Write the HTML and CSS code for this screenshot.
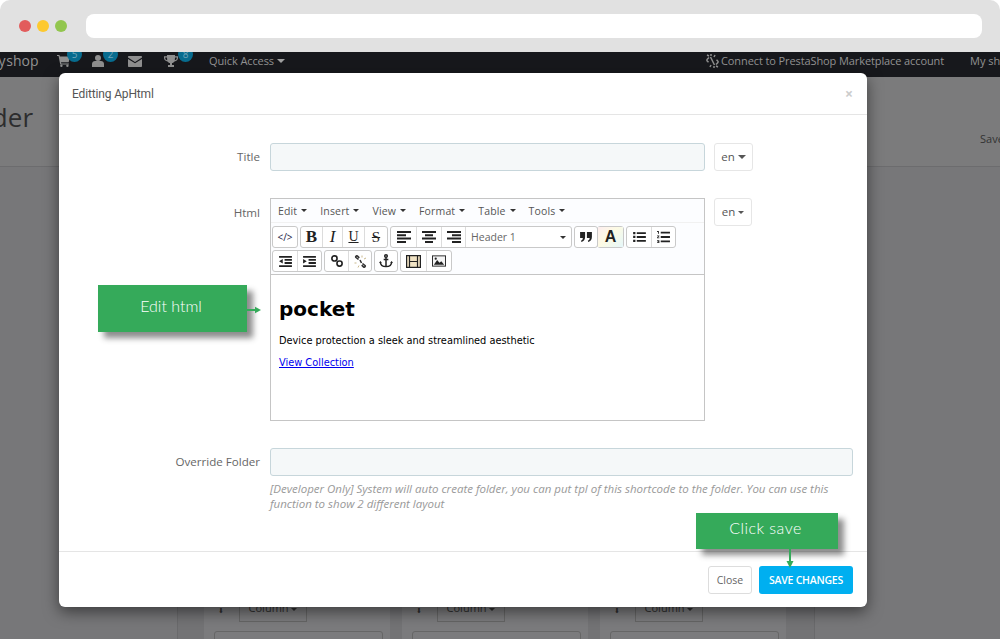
FILE: index.html
```html
<!DOCTYPE html>
<html lang="en">
<head>
<meta charset="utf-8">
<title>Editting ApHtml</title>
<link rel="stylesheet" href="styles.css">
</head>
<body>
<div class="screen">
  <header class="chrome">
    <div class="dots"><i class="dot red"></i><i class="dot yellow"></i><i class="dot green"></i></div>
    <div class="urlbar"></div>
  </header>

  <nav class="topnav">
    <div class="nav-left">
      <span class="shop">My shop</span>
      <span class="nav-icon cart">
        <svg width="13" height="12" viewBox="0 0 13 12"><path fill="#8f8f8f" d="M0 0h2.400l.5 1.600H13l-1.300 5.600H4l.3 1.200h7.600v1H3.200L1.600 1H0z"/><circle fill="#8f8f8f" cx="4.400" cy="10.800" r="1.200"/><circle fill="#8f8f8f" cx="10.400" cy="10.800" r="1.200"/></svg>
        <b class="badge">5</b>
      </span>
      <span class="nav-icon user">
        <svg width="12" height="12" viewBox="0 0 12 12"><circle fill="#8f8f8f" cx="6" cy="3" r="3"/><path fill="#8f8f8f" d="M0 12V9c0-2 1.500-3 3-3h6c1.500 0 3 1 3 3v3z"/></svg>
        <b class="badge">2</b>
      </span>
      <span class="nav-icon mail">
        <svg width="14" height="11" viewBox="0 0 14 11"><path fill="#8f8f8f" d="M1 0h12c.6 0 1 .4 1 1v.6L7 6 0 1.600V1c0-.6.4-1 1-1zM0 3l7 4.300L14 3v7c0 .6-.4 1-1 1H1c-.6 0-1-.4-1-1z"/></svg>
      </span>
      <span class="nav-icon trophy">
        <svg width="14" height="12" viewBox="0 0 14 12"><path fill="#8f8f8f" d="M3 0h8v1.200h3V3c0 2-1.500 3.200-3.500 3.400C10 7.200 9 7.800 8 8v2h2v2H4v-2h2V8C5 7.800 4 7.200 3.500 6.400 1.500 6.200 0 5 0 3V1.200h3zM1.200 2.400V3c0 1.200.8 2 2 2.200L3 2.400zm11.600 0H11l-.2 2.800c1.200-.2 2-1 2-2.200z"/></svg>
        <b class="badge">8</b>
      </span>
      <span class="quick">Quick Access <i class="caret caret-nav"></i></span>
    </div>
    <div class="nav-right">
      <svg class="broken-link" width="13" height="14" viewBox="0 0 13 14"><path fill="none" stroke="#8f8f8f" stroke-width="1.500" d="M3 3.500 1.500 5c-.8.800-.8 1.600 0 2.300l1 1M10 10.500l1.500-1.500c.8-.8.800-1.600 0-2.300l-1-1M4.500 3l4 8M1 1l2 1M5 0v2M8 14v-2M12 13l-2-1M9 1l-1 2M4 13l1-2"/></svg>
      <span class="connect">Connect to PrestaShop Marketplace account</span>
      <span class="myshop">My shop</span>
    </div>
  </nav>

  <div class="backdrop">
    <section class="page-head">
      <h1>Builder</h1>
      <span class="save-label">Save</span>
    </section>
    <section class="page-body">
      <div class="panel">
        <div class="col"><div class="col-tools"><span class="down">⬇</span><span class="col-btn">Column <i class="caret"></i></span></div><div class="col-box"></div></div>
        <div class="col"><div class="col-tools"><span class="down">⬇</span><span class="col-btn">Column <i class="caret"></i></span></div><div class="col-box"></div></div>
        <div class="col"><div class="col-tools"><span class="down">⬇</span><span class="col-btn">Column <i class="caret"></i></span></div><div class="col-box"></div></div>
      </div>
    </section>
  </div>

  <div class="modal">
    <div class="modal-head">
      <h2>Editting ApHtml</h2>
      <span class="close-x">×</span>
    </div>
    <div class="modal-body">
      <div class="row">
        <label class="lbl lbl-title">Title</label>
        <div class="input title-input"></div>
        <span class="lang">en <i class="caret caret-big"></i></span>
      </div>
      <div class="row row-html">
        <label class="lbl lbl-html">Html</label>
        <div class="editor">
          <div class="menubar">
            <span>Edit <i class="caret"></i></span>
            <span>Insert <i class="caret"></i></span>
            <span>View <i class="caret"></i></span>
            <span>Format <i class="caret"></i></span>
            <span>Table <i class="caret"></i></span>
            <span>Tools <i class="caret"></i></span>
          </div>
          <div class="toolbar">
            <div class="tool-row">
              <div class="grp"><span class="tb w24 code">&lt;/&gt;</span></div>
              <div class="grp">
                <span class="tb w21 tx bold">B</span>
                <span class="tb w20 tx ital">I</span>
                <span class="tb w22 tx under">U</span>
                <span class="tb w23 tx strike">S</span>
              </div>
              <div class="grp">
                <span class="tb w25"><svg width="14" height="12" viewBox="0 0 14 12"><path class="ic" d="M0 0h14v2H0zM0 3.300h9v2H0zM0 6.600h14v2H0zM0 10h9v2H0z"/></svg></span>
                <span class="tb w25"><svg width="14" height="12" viewBox="0 0 14 12"><path class="ic" d="M0 0h14v2H0zM3 3.300h8v2H3zM0 6.600h14v2H0zM3 10h8v2H3z"/></svg></span>
                <span class="tb w24"><svg width="14" height="12" viewBox="0 0 14 12"><path class="ic" d="M0 0h14v2H0zM5 3.300h9v2H5zM0 6.600h14v2H0zM5 10h9v2H5z"/></svg></span>
                <span class="tb select">Header 1 <i class="caret"></i></span>
              </div>
              <div class="grp quote-grp"><span class="tb w22"><svg width="12" height="10" viewBox="0 0 13 11"><path class="ic" d="M0 0h5.500v5.500c0 2.800-1.500 4.800-4 5.500L1 9.500c1.300-.5 2-1.500 2-3H0zM7.500 0H13v5.500c0 2.800-1.500 4.800-4 5.500l-.5-1.500c1.300-.5 2-1.500 2-3h-3z"/></svg></span></div>
              <div class="grp color-grp"><span class="tb w25 color">A</span></div>
              <div class="grp lists">
                <span class="tb w24"><svg width="13" height="10" viewBox="0 0 14 11"><path class="ic" d="M0 0h2.500v2.500H0zM4 .3h10v2H4zM0 4.200h2.500v2.500H0zM4 4.500h10v2H4zM0 8.500h2.500V11H0zM4 8.800h10v2H4z"/></svg></span>
                <span class="tb w24"><svg width="13" height="12" viewBox="0 0 14 13"><path class="ic" d="M0 0h2v3H1V1H0zM4 .8h10v2H4zM0 5h2.500v.8L1 7h1.500v.8H0V7l1.500-1.300H0zM4 5.500h10v2H4zM0 10h2.500v3H0v-.7h1.600v-.5H.5v-.6h1.100v-.5H0zM4 10.300h10v2H4z"/></svg></span>
              </div>
            </div>
            <div class="tool-row">
              <div class="grp">
                <span class="tb w24"><svg width="13" height="11" viewBox="0 0 14 12"><path class="ic" d="M0 0h14v2H0zM6 3.300h8v2H6zM6 6.600h8v2H6zM0 10h14v2H0zM4 3.300v5L0 5.800z"/></svg></span>
                <span class="tb w24"><svg width="13" height="11" viewBox="0 0 14 12"><path class="ic" d="M0 0h14v2H0zM6 3.300h8v2H6zM6 6.600h8v2H6zM0 10h14v2H0zM0 3.300v5l4-2.500z"/></svg></span>
              </div>
              <div class="grp">
                <span class="tb w23"><svg width="12" height="12" viewBox="0 0 13 13"><g fill="none" stroke="#222" stroke-width="1.800"><rect x="1" y="1" width="5.500" height="5.500" rx="2.500"/><rect x="6.500" y="6.500" width="5.500" height="5.500" rx="2.500"/></g></svg></span>
                <span class="tb w23"><svg width="13" height="13" viewBox="0 0 13 13"><g fill="none" stroke="#333" stroke-width="1.600"><path d="M4.500 4.500 2 2.500c-.8-.8.400-2.100 1.300-1.500l2 1.800M8.500 8.500l2.500 2c.8.800-.4 2.100-1.300 1.500l-2-1.800M6 5l1.500 3"/></g><path fill="none" stroke="#c9b98c" d="M8 .5v2M12 3l-2 1M.5 8h2M4 12.500l1-2"/></svg></span>
              </div>
              <div class="grp"><span class="tb w22"><svg width="14" height="14" viewBox="0 0 15 15"><g fill="none" stroke="#222" stroke-width="1.600"><circle cx="7.500" cy="2.200" r="1.400"/><path d="M7.500 3.500V14M5 6h5M1.500 8.500c0 3.200 2.500 5 6 5s6-1.800 6-5"/></g><path class="ic" d="m0 9.500 1.500-2 1.500 2zM12 9.500l1.500-2 1.500 2z"/></svg></span></div>
              <div class="grp">
                <span class="tb w25"><svg width="15" height="13" viewBox="0 0 15 13"><rect fill="#f1e3c4" width="15" height="13"/><path fill="none" stroke="#222" stroke-width="1.200" d="M.6.6h13.800v11.800H.6zM3.500.6v11.800M11.500.6v11.800M3.500 6.500h8"/></svg></span>
                <span class="tb w25"><svg width="14" height="12" viewBox="0 0 15 12"><path fill="#222" d="M0 0h15v12H0z"/><path fill="#f4f4f4" d="M1 1h13v10H1z"/><path fill="#222" d="m2 10 3.500-5 2.500 3 2-1.800 3 3.800z"/><circle fill="#222" cx="4" cy="3.500" r="1.200"/></svg></span>
              </div>
            </div>
          </div>
          <div class="content">
            <h3>pocket</h3>
            <p>Device protection a sleek and streamlined aesthetic</p>
            <p><a href="#">View Collection</a></p>
          </div>
        </div>
        <span class="lang lang-html">en <i class="caret"></i></span>
      </div>
      <div class="row row-override">
        <label class="lbl">Override Folder</label>
        <div class="override">
          <div class="input"></div>
          <p class="help">[Developer Only] System will auto create folder, you can put tpl of this shortcode to the folder. You can use this function to show 2 different layout</p>
        </div>
      </div>
    </div>
    <div class="modal-foot">
      <span class="btn btn-close">Close</span>
      <span class="btn btn-save">SAVE CHANGES</span>
    </div>
  </div>

  <div class="callout callout-edit">Edit html</div>
  <svg class="arrow arrow-right" width="14" height="8" viewBox="0 0 14 8"><path fill="none" stroke="#35aa5a" stroke-width="2" d="M0 4h9"/><path fill="#35aa5a" d="M8 .8 14 4 8 7.200z"/></svg>
  <div class="callout callout-save">Click save</div>
  <svg class="arrow arrow-down" width="8" height="19" viewBox="0 0 8 19"><path fill="none" stroke="#35aa5a" stroke-width="2" d="M4 0v13"/><path fill="#35aa5a" d="M.5 12h7L4 19z"/></svg>
</div>
</body>
</html>
```
FILE: styles.css
```css
* { box-sizing: border-box; }
html, body { margin: 0; padding: 0; background: #fff; }
body { font-family: "Open Sans", "Liberation Sans", sans-serif; color: #555; }
.screen { position: relative; width: 1000px; height: 639px; overflow: hidden; display: flex; flex-direction: column; }

/* browser chrome */
.chrome { height: 52px; flex: none; background: #e1e1e1; border-radius: 10px 10px 0 0; display: flex; align-items: center; padding: 0 18px 0 19px; }
.dots { display: flex; gap: 6px; width: 67px; }
.dot { width: 12px; height: 12px; border-radius: 50%; }
.red { background: #e25c5c; }
.yellow { background: #fdc92f; }
.green { background: #92c64e; }
.urlbar { flex: 1; height: 24px; background: #fff; border-radius: 8px; }

/* shop nav */
.topnav { height: 25px; flex: none; background: #17181c; color: #929292; display: flex; justify-content: space-between; font-size: 11px; line-height: 18px; padding-bottom: 7px; white-space: nowrap; overflow: hidden; }
.nav-left, .nav-right { display: flex; align-items: center; height: 18px; }
.shop { font-size: 14px; margin-left: -14px; width: 71px; word-spacing: -3px; }
.nav-icon { position: relative; display: flex; align-items: center; }
.cart { width: 35px; }
.user { width: 36px; }
.mail { width: 36px; }
.trophy { width: 45px; }
.badge { position: absolute; top: -8px; width: 15px; height: 15px; border-radius: 50%; background: #086c8f; color: #6fa3b8; font-size: 10px; font-weight: 400; line-height: 14px; text-align: center; }
.cart .badge { left: 10px; }
.user .badge { left: 11px; }
.trophy .badge { left: 14px; }
.quick { display: flex; align-items: center; gap: 3px; letter-spacing: -.1px; }
.broken-link { margin-right: 2px; }
.connect { width: 249px; letter-spacing: -.1px; }
.myshop { width: 30px; }

/* dimmed page */
.backdrop { flex: 1; background: #777779; display: flex; flex-direction: column; }
.page-head { height: 90px; flex: none; background: #7b7b7c; border-bottom: 1px solid #6c6c6e; padding-top: 22px; display: flex; justify-content: space-between; }
.page-head h1 { margin: 0 0 0 -54px; font-size: 26px; font-weight: 400; line-height: 36px; color: #2d2d2e; }
.save-label { font-size: 11px; margin: 32px -3px 0 0; width: 23px; color: #333; overflow: hidden; }
.page-body { flex: 1; padding: 0 185px 0 177px; display: flex; }
.panel { flex: 1; background: #737375; border-left: 1px solid #6a6a6c; border-right: 1px solid #6a6a6c; display: flex; align-items: flex-end; gap: 12px; padding: 0 28px 0 26px; }
.col { flex: 1; height: 40px; background: #7b7b7d; padding: 0 0 0 10px; }
.col-tools { display: flex; align-items: center; height: 23px; font-size: 11px; color: #2e2e2e; }
.down { width: 25px; font-size: 7px; padding-left: 4px; }
.col-btn { width: 68px; height: 23px; border: 1px solid #666; text-align: center; line-height: 16px; }
.col-box { height: 20px; margin-top: 9px; border: 1px solid #666; border-radius: 3px; width: 169px; }

/* modal */
.modal { position: absolute; left: 59px; top: 73px; width: 808px; height: 534px; background: #fff; border-radius: 6px; box-shadow: 0 5px 15px rgba(0, 0, 0, .5); display: flex; flex-direction: column; }
.modal-head { height: 42px; flex: none; border-bottom: 1px solid #e5e5e5; display: flex; justify-content: space-between; align-items: center; padding: 0 14px 0 13px; }
.modal-head h2 { margin: 0; padding-top: 1px; font-family: "Roboto", "Open Sans", sans-serif; font-size: 12px; font-weight: 400; letter-spacing: -.15px; color: #555; }
.close-x { font-size: 14px; font-weight: 700; color: #ccc; }
.modal-body { flex: 1; padding: 28px 14px 0 0; }
.row { display: flex; align-items: flex-start; margin-bottom: 27px; }
.lbl { width: 201px; flex: none; text-align: right; font-size: 11.600px; line-height: 28px; color: #666; margin-right: 10px; }
.lbl-html { padding-top: 1px; }
.input { height: 28px; background: #f5f8f9; border: 1px solid #c7d6db; border-radius: 3px; }
.title-input { width: 435px; }
.lang { width: 39px; height: 28px; margin-left: 9px; border: 1px solid #e6e6e6; border-radius: 3px; font-size: 11.500px; line-height: 26px; text-align: center; color: #555; display: flex; align-items: center; justify-content: center; gap: 3px; }
.caret { display: inline-block; width: 0; height: 0; border: 3px solid transparent; border-top-color: currentColor; border-bottom: 0; vertical-align: middle; }
.caret-big { border-width: 4px 4px 0; color: #555; }
.caret-nav { border-width: 4px 4px 0; color: #a0a0a0; }

/* editor */
.editor { width: 435px; height: 223px; flex: none; border: 1px solid #c5c5c5; display: flex; flex-direction: column; background: #fff; }
.menubar { height: 24px; flex: none; background: #fcfdff; border-bottom: 1px solid #f1f1f1; display: flex; align-items: center; gap: 13px; padding: 0 7px; font-size: 10.500px; letter-spacing: .15px; color: #555; white-space: nowrap; }
.menubar span { display: flex; align-items: center; gap: 4px; }
.menubar .caret { color: #333; }
.toolbar { height: 52px; flex: none; background: #fcfdff; border-bottom: 1px solid #c5c5c5; padding: 3px 1px 0; }
.tool-row { display: flex; height: 23px; gap: 2px; margin-bottom: 1px; }
.grp { display: flex; height: 22px; border: 1px solid #c9c9c9; border-radius: 3px; background: #fff; }
.tb { display: flex; align-items: center; justify-content: center; height: 20px; border-left: 1px solid #dcdcdc; color: #222; }
.tb:first-child { border-left: 0; }
.w20 { width: 20px; }
.w21 { width: 21px; }
.w22 { width: 22px; }
.w23 { width: 23px; }
.w24 { width: 24px; }
.w25 { width: 25px; }
.ic { fill: #222; }
.tx { font-family: "Liberation Serif", serif; font-size: 15px; line-height: 20px; }
.code { font-family: "Open Sans", sans-serif; font-size: 10px; color: #224; }
.bold { font-weight: 700; font-size: 17px; }
.ital { font-style: italic; font-size: 17px; }
.under { text-decoration: underline; font-size: 14px; }
.strike { text-decoration: line-through; font-size: 15px; }
.color { font-family: "Liberation Sans", sans-serif; font-weight: 700; font-size: 16px; background: linear-gradient(135deg, #fdeef0, #fdfbe4 45%, #e5f7fa); }
.select { width: 106px; justify-content: space-between; padding: 0 5px 0 5px; font-size: 10.500px; color: #666; font-family: "Open Sans", sans-serif; }
.select .caret { color: #333; }
.quote-grp { margin-right: -3px; }
.color-grp { background: #fcfdff; }
.content { flex: 1; padding: 20px 8px; font-family: "DejaVu Sans", sans-serif; color: #000; font-size: 9.800px; }
.content h3 { margin: 0 0 12px; font-size: 20px; line-height: 28px; font-weight: 700; }
.content p { margin: 0 0 10px; line-height: 12px; }
.content a { color: #00e; }
.lang-html { width: 38px; }

/* override */
.row-override { margin-bottom: 0; }
.override { width: 583px; flex: none; }
.help { margin: 5px 0 0; font-size: 11.500px; line-height: 15px; font-style: italic; color: #999; }

/* footer */
.modal-foot { height: 56px; flex: none; border-top: 1px solid #e5e5e5; display: flex; justify-content: flex-end; align-items: flex-start; gap: 7px; padding: 14px 14px 0 0; }
.btn { height: 28px; border-radius: 3px; display: flex; align-items: center; justify-content: center; font-size: 10.500px; }
.btn-close { width: 44px; border: 1px solid #ddd; color: #666; }
.btn-save { width: 94px; background: #00aff0; color: #fff; font-weight: 600; letter-spacing: -.25px; }

/* annotations */
.callout { position: absolute; background: #35aa5a; color: #fff; font-family: "Lato", sans-serif; font-weight: 300; font-size: 16px; display: flex; align-items: center; justify-content: center; box-shadow: 6px 6px 6px rgba(0, 0, 0, .45); }
.callout-edit { left: 98px; top: 285px; width: 149px; height: 47px; padding: 0 3px 6px 0; }
.callout-save { left: 696px; top: 513px; width: 142px; height: 36px; padding: 0 3px 7px 0; letter-spacing: .45px; }
.arrow { position: absolute; }
.arrow-right { left: 247px; top: 306px; }
.arrow-down { left: 786px; top: 549px; }
```
